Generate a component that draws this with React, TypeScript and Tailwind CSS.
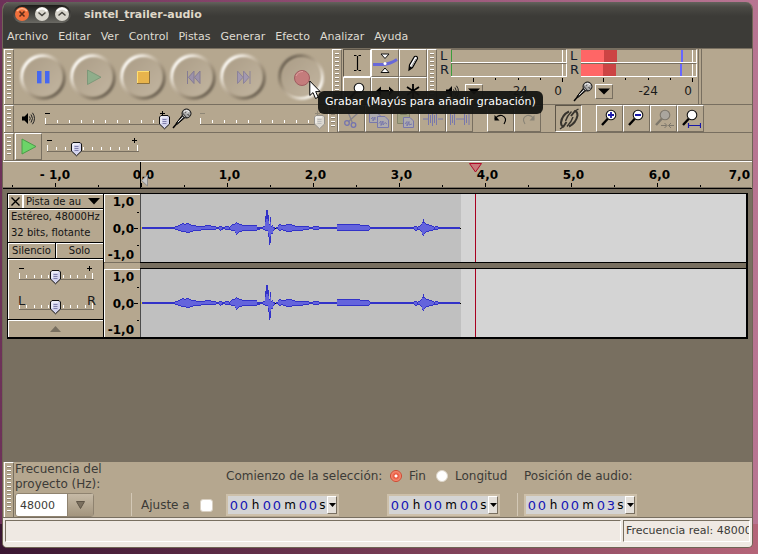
import React from "react";

const MENUS = ["Archivo", "Editar", "Ver", "Control", "Pistas", "Generar", "Efecto", "Analizar", "Ayuda"];

function Grip() {
  return (
    <div className="flex w-[10px] shrink-0 self-stretch border-l border-t border-r border-l-white border-t-white border-r-[#786f60] px-[2px] py-[3px]">
      <div className="w-[4px] bg-[repeating-linear-gradient(to_bottom,#fff_0px,#fff_1px,#8f8370_1px,#8f8370_2px,transparent_2px,transparent_4px)]" />
    </div>
  );
}

function Knob({ label, pressed, children }: { label: string; pressed?: boolean; children: React.ReactNode }) {
  const id = "k" + label;
  return (
    <button aria-label={label} className="block h-[50px] w-[50px]">
      <svg width="50" height="50" viewBox="0 0 50 50">
        <defs>
          <linearGradient id={id + "r"} x1={pressed ? 1 : 0} y1={pressed ? 1 : 0} x2={pressed ? 0 : 1} y2={pressed ? 0 : 1}>
            <stop offset="0.12" stopColor="#fffdf8" />
            <stop offset="0.42" stopColor="#c3b6a1" />
            <stop offset="0.62" stopColor="#a3957f" />
            <stop offset="0.9" stopColor="#6a6051" />
          </linearGradient>
          <linearGradient id={id + "f"} x1="0" y1="0" x2="1" y2="1">
            <stop offset="0" stopColor="#ab9d87" />
            <stop offset="1" stopColor="#c2b5a0" />
          </linearGradient>
          <filter id={id + "b"} x="-20%" y="-20%" width="140%" height="140%">
            <feGaussianBlur stdDeviation="1.3" />
          </filter>
        </defs>
        <circle cx="25" cy="25" r="21" fill="none" stroke={`url(#${id}r)`} strokeWidth="4" filter={`url(#${id}b)`} />
        <circle cx="25" cy="25" r="19" fill={`url(#${id}f)`} filter={`url(#${id}b)`} />
        {children}
      </svg>
    </button>
  );
}

function Slider(props: {
  label: string;
  width: number;
  start: number;
  step: number;
  count: number;
  value: number;
  ends?: [string, string];
  disabled?: boolean;
}) {
  const { label, width, start, step, count, value, ends, disabled } = props;
  const end = start + step * (count - 1);
  const tx = Math.round(start + (end - start) * (value / 100));
  const ink = disabled ? "#8f8776" : "#000";
  return (
    <div className="relative h-[26px]">
      <svg width={width} height="26" className="block" shapeRendering="crispEdges">
        {Array.from({ length: count }, (_, i) => {
          const x = Math.round(start + i * step);
          const big = i === 0 || i === count - 1;
          return <rect key={i} x={x} y={big ? 12 : 14} width="1" height={big ? 6 : 3} fill="#fff" />;
        })}
        <rect x={start} y="18" width={end - start + 2} height="1" fill="#786f60" />
        {ends ? (
          <g fontFamily="DejaVu Sans, sans-serif" fontSize="13" fill="#1c1c1c">
            <text x={start - 1} y="14">{ends[0]}</text>
            <text x={end - 5} y="14">{ends[1]}</text>
          </g>
        ) : (
          <g fill={ink}>
            <rect x={start} y="7" width="5" height="1" />
            <rect x={end - 5} y="7" width="5" height="1" />
            <rect x={end - 3} y="5" width="1" height="5" />
          </g>
        )}
        <g transform={`translate(${tx - 5} 9)`} shapeRendering="auto">
          <path d="M2 .5H9L10.5 2V9L5.500 13.800L.5 9V2Z" fill={disabled ? "#dcd8d0" : "#d4d4ee"} stroke={disabled ? "#94908a" : "#111"} />
          <path d="M2 8V2H8" fill="none" stroke="#fff" />
          <path d="M3.500 4.500H7.500M3.500 6.500H7.500M3.500 8.500H7.500" stroke={disabled ? "#bbb" : "#8080ac"} />
        </g>
      </svg>
      <input type="range" aria-label={label} defaultValue={value} disabled={disabled} className="absolute inset-0 h-full w-full opacity-0" />
    </div>
  );
}

function Mic() {
  return (
    <svg width="20" height="21" viewBox="0 0 20 21">
      <path d="M1 20L7 13" stroke="#000" strokeWidth="1.500" />
      <path d="M4 15.500L10.500 7L13 9.500L5.500 16Z" fill="#444" stroke="#000" />
      <path d="M6 14L11.500 8.500" stroke="#ddd" />
      <circle cx="14.500" cy="5.500" r="4.500" fill="#aaa" stroke="#111" />
      <path d="M10.500 5L15 10M12.500 3L17.500 8" stroke="#222" strokeWidth=".9" />
      <path d="M12 3.500L15 2.500L17 4M14 5h2" stroke="#fff" fill="none" />
    </svg>
  );
}

function Speaker() {
  return (
    <svg width="13" height="13" viewBox="0 0 13 13">
      <path d="M0 4.500H2.500L6 1V12L2.500 8.500H0Z" fill="#000" />
      <path d="M7.500 4.500Q9 6.500 7.500 8.500M9 2.500Q12 6.500 9 10.500M10.500 .8Q14.500 6.500 10.500 12.200" fill="none" stroke="#222" />
    </svg>
  );
}

function ToolButton({ label, down, wide, children }: { label: string; down?: boolean; wide?: boolean; children: React.ReactNode }) {
  const edge = down
    ? "border-l-[#5d5548] border-t-[#5d5548] border-r-white border-b-white"
    : "border-l-white border-t-white border-r-[#786f60] border-b-[#786f60]";
  return (
    <button aria-label={label} className={`flex shrink-0 items-center justify-center border ${edge} ${wide ? "h-[28px] w-[28px]" : "h-[27px] w-[27px]"}`}>
      {children}
    </button>
  );
}

function Lens({ kind }: { kind: "plus" | "minus" | "sel" | "fit" | "plain" }) {
  const dim = kind === "sel";
  return (
    <svg width="21" height="21" viewBox="0 0 21 21">
      <path d="M3 17L9 10.500" stroke={dim ? "#7d776b" : "#000"} strokeWidth="2.400" />
      <circle cx="12" cy="7" r="4.800" fill={dim ? "#aaa69e" : "#fff"} stroke={dim ? "#7d776b" : "#111"} strokeWidth="1.100" />
      {(kind === "plus" || kind === "minus") && <path d="M9 7H15" stroke="#1818a8" strokeWidth="1.800" />}
      {kind === "plus" && <path d="M12 4V10" stroke="#1818a8" strokeWidth="1.800" />}
      {kind === "fit" && <path d="M8.500 15V20M20.500 15V20M9 17.500H20" stroke="#1818a8" strokeWidth="1.200" />}
      {dim && <path d="M8 17.500H13.500M15.500 17.500H21M11.500 15L14 17.500L11.500 20M18 15L15.500 17.500L18 20" fill="none" stroke="#7d776b" />}
    </svg>
  );
}

function Meter({ name, levels }: { name: string; levels?: { light: string; dark: string; peak: string }[] }) {
  return (
    <div className="flex w-[130px] flex-col">
      {[0, 1].map((i) => (
        <div key={i} className="flex h-[14px] items-center">
          <span className="w-[14px] pl-[3px] text-[13px] leading-[14px] text-[#141c2c]">{i ? "R" : "L"}</span>
          <div className="flex h-[14px] w-[116px] border-b border-r border-b-white border-r-white border-t border-t-[#786f60]" role="meter" aria-label={name + (i ? " R" : " L")} aria-valuenow={levels ? 15 : 0}>
            {levels ? (
              <>
                <div className={`${levels[i].light} bg-[#ff6666]`} />
                <div className={`${levels[i].dark} bg-[#cc4444]`} />
                <div className="flex-1" />
                <div className="w-[2px] bg-[#6666ff]" />
                <div className={levels[i].peak} />
              </>
            ) : (
              <>
                <div className="w-[1px] bg-[#3c9c3c]" />
                <div className="flex-1" />
              </>
            )}
            <div className="mr-[3px] w-[1px] bg-white" />
          </div>
        </div>
      ))}
      <svg width="130" height="5" className="block" shapeRendering="crispEdges">
        {[36, 58, 81, 103, 125].map((x, i) => (
          <rect key={x} x={x} y="1" width="1" height={i === 0 || i === 4 ? 4 : 2} fill="#000" />
        ))}
      </svg>
      <div className="flex h-[18px] items-center text-[12px] text-[#1a1a1a]">
        <div className="flex w-[28px] items-center justify-end pr-[2px]">{levels ? <Mic /> : <div className="pr-[4px]"><Speaker /></div>}</div>
        <button aria-label={name} className="flex h-[15px] w-[18px] items-center justify-center border border-b-[#786f60] border-l-white border-r-[#786f60] border-t-white">
          <svg width="12" height="7"><path d="M0 .5H12L6 6.500Z" fill="#000" /></svg>
        </button>
        <span className="w-[45px] text-right">-24</span>
        <span className="w-[34px] text-right">0</span>
      </div>
    </div>
  );
}

const ENVELOPE: [number, number, number][] = [
  [0, 1, 1], [32, 1, 1], [35, 2, 2], [38, 3, 3], [41, 5, 4], [43, 4, 4], [47, 5, 5], [50, 3, 4], [53, 3, 3], [56, 2, 3], [62, 2, 2], [66, 3, 2], [72, 2, 2],
  [77, 1, 1], [79, 2, 3], [82, 1, 1], [86, 2, 2], [88, 1, 2], [91, 4, 3], [93, 4, 3], [95, 6, 7], [98, 4, 4], [103, 3, 3], [115, 3, 3], [116, 1, 2],
  [121, 1, 1], [123, 2, 2], [124, 12, 3], [125, 18, 3], [126, 18, 3], [127, 13, 9], [128, 4, 17], [129, 11, 15], [130, 2, 6], [131, 3, 6], [132, 1, 3],
  [134, 0, 0], [136, 1, 1], [138, 4, 3], [140, 3, 2], [143, 3, 3], [146, 4, 4], [149, 4, 4], [152, 3, 3], [155, 2, 3], [167, 2, 2], [168, 1, 1],
  [176, 2, 2], [178, 1, 1], [195, 1, 1], [196, 4, 3], [210, 4, 3], [227, 3, 3], [229, 1, 1], [272, 1, 1], [274, 2, 3], [276, 1, 2], [278, 2, 2],
  [280, 4, 4], [281, 6, 7], [282, 9, 8], [283, 6, 6], [285, 4, 4], [290, 3, 3], [293, 1, 2], [295, 2, 2], [298, 1, 1], [319, 1, 1],
];

function Waveform() {
  const cols: { x: number; u: number; d: number }[] = [];
  for (let k = 0; k < ENVELOPE.length - 1; k++) {
    const [x0, u0, d0] = ENVELOPE[k];
    const [x1, u1, d1] = ENVELOPE[k + 1];
    for (let x = x0; x < x1; x++) {
      const t = (x - x0) / (x1 - x0);
      cols.push({ x, u: Math.round(u0 + (u1 - u0) * t), d: Math.round(d0 + (d1 - d0) * t) });
    }
  }
  return (
    <svg width="320" height="68" className="block" shapeRendering="crispEdges">
      <rect x="0" y="34" width="320" height="1" fill="#000" />
      {cols.map(({ x, u, d }) => (
        <rect key={x} x={x} y={34 - u} width="1" height={u + d} fill="#3232c8" />
      ))}
      {cols.filter(({ u, d }) => u + d > 3).map(({ x, u, d }) => {
        const a = u > 8 ? Math.round(u * 0.5) : u - 1;
        const b = d > 8 ? Math.round(d * 0.5) : d - 1;
        return <rect key={x} x={x} y={34 - a} width="1" height={a + b} fill="#6464dc" />;
      })}
      <rect x="0" y="33" width="1" height="2" fill="#d8c840" />
    </svg>
  );
}

function Channel() {
  return (
    <div className="flex h-[68px]">
      <div className="flex w-[36px] border-l border-t border-l-white border-t-white">
        <div className="flex flex-1 flex-col justify-between text-right text-[12px] font-bold leading-[14px] text-black">
          <span>1,0</span>
          <span>0,0</span>
          <span>-1,0</span>
        </div>
        <svg width="6" height="67" shapeRendering="crispEdges">
          <path d="M0 33.500H4M3 17.500H5M3 50.500H5" stroke="#000" />
        </svg>
      </div>
      <div className="border-l border-[#4c4c4c] bg-[#c0c0c0]">
        <Waveform />
      </div>
      <div className="flex flex-1 bg-[#d4d4d4] pl-[14px]">
        <div className="w-[1px] bg-[#a80020]" />
      </div>
    </div>
  );
}

function TimeBox({ label, seconds }: { label: string; seconds: string }) {
  const group = (a: string, b: string) => (
    <>
      <span className="w-[10px] text-center text-[#1414b4]">{a}</span>
      <span className="w-[10px] text-center text-[#1414b4]">{b}</span>
    </>
  );
  return (
    <div role="group" aria-label={label} className="flex h-[22px] w-[113px] items-center border-2 border-[#cdc0aa] bg-[#d4d4d4] pl-[1px] text-[13px] text-black">
      {group("0", "0")}
      <span className="w-[13px] text-center text-[12px]">h</span>
      {group("0", "0")}
      <span className="w-[16px] text-center text-[12px]">m</span>
      {group(seconds[0], seconds[1])}
      <span className="w-[9px] text-center text-[12px]">s</span>
      <button aria-label={"Formato de " + label} className="flex h-full flex-1 items-center justify-center border border-b-[#786f60] border-l-white border-r-[#786f60] border-t-white bg-[#e4e0da]">
        <svg width="7" height="4"><path d="M0 0H7L3.500 4Z" fill="#000" /></svg>
      </button>
    </div>
  );
}

export default function App() {
  return (
    <div className="relative flex min-h-screen bg-[linear-gradient(to_right,#6d3159_0%,#8d4b70_40%,#b87592_100%)] font-['DejaVu_Sans','Liberation_Sans',sans-serif]">
      <div className="flex min-w-0 flex-1 flex-col bg-[linear-gradient(to_right,#3a1632,#6e3650_45%,#b46478)] bg-[length:100%_30px] bg-bottom bg-no-repeat pb-[6px] pl-[2px] pr-[5px] pt-[2px]">
        <div className="flex min-w-0 flex-1 flex-col overflow-hidden rounded-b-[5px] rounded-t-[7px] border-x border-b border-[#6f6455] bg-[#b5a78f]">
          <header className="bg-[linear-gradient(to_bottom,#63625c_0px,#4b4a45_5px,#3c3b37_14px)]">
            <div className="flex h-[24px] items-center pl-[10px]">
              <div className="mr-[13px] flex h-[18px] items-center gap-[6px] rounded-full bg-[linear-gradient(to_bottom,#1d1c1a,#6a6963)] px-[2px]">
                <button aria-label="Cerrar">
                  <svg width="14" height="14" viewBox="0 0 14 14"><circle cx="7" cy="7" r="7" fill="#f0703c" /><path d="M2 4Q7-1 12 4" fill="none" stroke="#ffb48c" strokeWidth="1.500" /><path d="M4.500 4.500L9.500 9.500M9.500 4.500L4.500 9.500" stroke="#5c2c18" strokeWidth="1.600" /></svg>
                </button>
                <button aria-label="Minimizar">
                  <svg width="14" height="14" viewBox="0 0 14 14"><circle cx="7" cy="7" r="7" fill="#d8d5cc" /><path d="M2 4Q7-1 12 4" fill="none" stroke="#fff" strokeWidth="2" /><path d="M3.500 5.500L7 8.500L10.500 5.500" fill="none" stroke="#44423c" strokeWidth="1.500" /></svg>
                </button>
                <button aria-label="Maximizar">
                  <svg width="14" height="14" viewBox="0 0 14 14"><circle cx="7" cy="7" r="7" fill="#d8d5cc" /><path d="M2 4Q7-1 12 4" fill="none" stroke="#fff" strokeWidth="2" /><path d="M3.500 8.500L7 5.500L10.500 8.500" fill="none" stroke="#44423c" strokeWidth="1.500" /></svg>
                </button>
              </div>
              <h1 className="pt-[2px] text-[11px] font-bold text-[#dfd8c8]">sintel_trailer-audio</h1>
            </div>
            <nav className="flex h-[22px] items-center gap-[10px] pl-[4px] text-[11px] text-[#dfdbd2]">
              {MENUS.map((m) => (
                <button key={m}>{m}</button>
              ))}
            </nav>
          </header>

          <div className="border-t border-[#786f60] pl-[1px]">
            <div className="flex h-[56px] border-b border-[#786f60]">
              <Grip />
              <div className="flex w-[318px] items-center pl-[4px]">
                <Knob label="Pausa"><path d="M19 19H23.500V31H19ZM27 19H31.500V31H27Z" fill="#4668f0" /><path d="M19 31.500H23.500M27 31.500H31.500" stroke="#8c93c0" /></Knob>
                <Knob label="Reproducir"><path d="M19.500 18V32.500L33 25.200Z" fill="#8fae8b" stroke="#759374" strokeWidth=".8" /></Knob>
                <Knob label="Detener"><path d="M19 19H31V31H19Z" fill="#e8b44c" /><path d="M19.500 31V19.500H31" fill="none" stroke="#ffdf70" /><path d="M19 31.500H31.500V19" fill="none" stroke="#8d713c" /></Knob>
                <Knob label="Inicio"><path d="M19.500 19V32M26 19V31.500L20.500 25.300ZM32 19V31.500L26.500 25.300Z" fill="#9c92aa" stroke="#857c94" /></Knob>
                <Knob label="Final"><path d="M19.500 19V31.500L25 25.300ZM25.500 19V31.500L31 25.300ZM32 19V32" fill="#a399b0" stroke="#8c839a" /></Knob>
                <div className="pl-[8px]">
                  <Knob label="Grabar" pressed><circle cx="26" cy="26" r="7.500" fill="#c47c7c" stroke="#a05c60" /><path d="M20 24Q22 19.500 27 19.500" fill="none" stroke="#e0a0a0" /></Knob>
                </div>
              </div>
              <Grip />
              <div className="grid grid-cols-3 pl-[1px]">
                <ToolButton wide label="Selección" down><svg width="20" height="20" viewBox="0 0 20 20"><path d="M7 2.500H9.500M11.500 2.500H14M7 17.500H9.500M11.500 17.500H14M10.500 3V17" stroke="#000" strokeWidth="1.200" /></svg></ToolButton>
                <ToolButton wide label="Envolvente"><svg width="26" height="22" viewBox="0 0 26 22"><path d="M1 12.500H11Q18 12 25 7.500" fill="none" stroke="#6868d8" strokeWidth="3" /><circle cx="13" cy="11.500" r="1.500" fill="#fff" /><path d="M9 2H17L13 6.500ZM9 20.500H17L13 16Z" fill="#fff" stroke="#111" /></svg></ToolButton>
                <ToolButton wide label="Dibujo"><svg width="20" height="20" viewBox="0 0 20 20"><path d="M6 17L6.500 12L11.500 3.500Q14.500 2.500 14.500 5.500L9.500 14.500Z" fill="#fff" stroke="#000" strokeWidth="1.200" /><path d="M6 17L6.500 13L9 14.500Z" fill="#000" /><path d="M13 6L8.500 13.500" stroke="#888" /></svg></ToolButton>
                <ToolButton wide label="Zoom"><Lens kind="plain" /></ToolButton>
                <ToolButton wide label="Desplazamiento"><svg width="18" height="12" viewBox="0 0 18 12"><path d="M0 6L5 1.500V10.500ZM18 6L13 1.500V10.500ZM4 5H14V7H4Z" fill="#000" /></svg></ToolButton>
                <ToolButton wide label="Multi"><svg width="14" height="14" viewBox="0 0 14 14"><path d="M7 0V14M1 3L13 11M13 3L1 11" stroke="#000" strokeWidth="1.800" /></svg></ToolButton>
              </div>
              <Grip />
              <div className="flex border-r border-[#786f60] pr-[1px]">
                <Meter name="Reproducción" />
                <Meter
                  name="Grabación"
                  levels={[
                    { light: "w-[23px]", dark: "w-[13px]", peak: "w-[9px]" },
                    { light: "w-[22px]", dark: "w-[13px]", peak: "w-[10px]" },
                  ]}
                />
              </div>
              <div className="w-[3px] border-r border-[#786f60]" />
            </div>

            <div className="flex h-[28px] border-b border-[#786f60]">
              <Grip />
              <div className="flex w-[314px] items-center pl-[8px]">
                <Speaker />
                <div className="pl-[5px]"><Slider label="Volumen de salida" width={132} start={5} step={12} count={11} value={99} /></div>
                <Mic />
                <div className="pl-[3px]"><Slider label="Volumen de entrada" width={130} start={5} step={12} count={11} value={99} disabled /></div>
              </div>
              <Grip />
              <ToolButton label="Cortar"><svg width="20" height="20" viewBox="0 0 20 20" fill="none" stroke="#7474b0" strokeWidth="1.300"><path d="M6 3L10.500 14M16 4L6 13" stroke="#86838c" /><circle cx="5" cy="14" r="2.300" /><circle cx="11.500" cy="16" r="2.300" /></svg></ToolButton>
              <ToolButton label="Copiar"><svg width="22" height="20" viewBox="0 0 22 20" stroke="#7878ac" fill="#aeabae"><path d="M1.500 3.500H9L12.500 7V13.500H1.500Z" /><path d="M9.500 7.500H17L20.500 11V18.500H9.500Z" /><path d="M3 10L5 8V12L7 8V11M11 14.500L13 12V16.500L15 12V16L17 13.500L19 15" fill="none" /></svg></ToolButton>
              <ToolButton label="Pegar"><svg width="22" height="20" viewBox="0 0 22 20" stroke="#7878ac" fill="#aeabae"><path d="M2.500 3.500H14.500V14.500H2.500Z" fill="#a3a384" stroke="#85856a" /><path d="M5.500 2.500H11.500V5.500H5.500Z" fill="#b5b5a0" stroke="#85856a" /><path d="M8.500 8.500H15L18.500 12V18.500H8.500Z" /><path d="M10 15L12 12.500V17L14 12.500V16L17 15" fill="none" /></svg></ToolButton>
              <ToolButton label="Recortar"><svg width="22" height="20" viewBox="0 0 22 20" stroke="#7878ac" fill="none"><path d="M1 10H6M16 10H21M6.500 3V16M8.500 6V14M10.500 3V17M12.500 6V14M14.500 3V16" /></svg></ToolButton>
              <ToolButton label="Silenciar"><svg width="22" height="20" viewBox="0 0 22 20" stroke="#7878ac" fill="none"><path d="M1.500 3V16M3.500 6V14M5.500 3V16M7 10H15M15.500 3V16M17.500 6V14M20 3V16" /></svg></ToolButton>
              <div className="w-[14px]" />
              <ToolButton label="Deshacer"><svg width="16" height="14" viewBox="0 0 16 14"><path d="M2 7Q5 2.500 9 3.500Q15 6 11 12" fill="none" stroke="#000" strokeWidth="1.200" /><path d="M1.500 3V8.500H6.500Z" fill="#000" /></svg></ToolButton>
              <ToolButton label="Rehacer"><svg width="16" height="14" viewBox="0 0 16 14"><path d="M14 7Q11 2.500 7 3.500Q1 6 5 12" fill="none" stroke="#8a8477" strokeWidth="1.200" /><path d="M14.500 3V8.500H9.500Z" fill="#8a8477" /></svg></ToolButton>
              <div className="w-[14px]" />
              <ToolButton label="Enlazar pistas" down><svg width="24" height="24" viewBox="0 0 24 24" fill="none" stroke="#38342e" strokeWidth="2"><path d="M12 4.500Q5 8 4 15.500Q4 19 6.500 19.500L9.500 15" /><path d="M12 19.500Q19 16 20.500 8.500Q20.500 4.500 18 4L14 9" /><path d="M8.500 14Q10 9 14.500 4.500M10 19.500Q14.500 15 16 10" strokeWidth="1.400" /><path d="M18 4L21.500 2M6.500 19.500L3 22" strokeWidth="1.400" /></svg></ToolButton>
              <div className="w-[14px]" />
              <ToolButton label="Acercar"><Lens kind="plus" /></ToolButton>
              <ToolButton label="Alejar"><Lens kind="minus" /></ToolButton>
              <ToolButton label="Ajustar selección"><Lens kind="sel" /></ToolButton>
              <ToolButton label="Ajustar proyecto"><Lens kind="fit" /></ToolButton>
            </div>

            <div className="flex h-[28px] border-b border-[#786f60]">
              <Grip />
              <div className="pl-[1px]">
                <ToolButton label="Reproducir a velocidad"><svg width="16" height="17" viewBox="0 0 16 17"><path d="M1 1V16L15 8.500Z" fill="#6cd468" stroke="#4a9c48" /></svg></ToolButton>
              </div>
              <Slider label="Velocidad" width={110} start={5} step={9} count={11} value={32} />
            </div>
          </div>

          <div className="relative h-[28px] border-b border-t border-b-black border-t-white">
            <div className="flex h-[20px] items-center pl-[9px] pr-[2px] pt-[6px] text-[12px] font-bold text-black">
              <span className="w-[86px] shrink-0 text-center">- 1,0</span>
              {["0,0", "1,0", "2,0", "3,0", "4,0", "5,0", "6,0"].map((t) => (
                <span key={t} className="w-[86px] shrink-0 pl-[5px] text-center">{t}</span>
              ))}
              <span className="flex-1 text-right">7,0</span>
            </div>
            <svg width="748" height="6" className="block" shapeRendering="crispEdges">
              {Array.from({ length: 17 }, (_, i) => (
                <rect key={i} x={9 + i * 43} y={i % 2 ? 1 : 3} width="1" height={i % 2 ? 4 : 2} fill="#000" />
              ))}
              <rect x="0" y="5" width="748" height="1" fill="#786f60" />
            </svg>
            <svg width="748" height="27" className="absolute left-0 top-0" shapeRendering="crispEdges">
              <rect x="137" y="0" width="1" height="26" fill="#000" />
              <path d="M144.500 13V24L138.500 18.500Z" fill="#c8c8c8" stroke="#8c8c8c" shapeRendering="auto" />
              <path d="M466.500 1.500H478.500L472.500 10Z" fill="#c87878" stroke="#b00828" shapeRendering="auto" />
            </svg>
          </div>

          <main className="flex-1 bg-[#786f60] p-[4px]">
            <section className="flex h-[146px] border border-b-2 border-r-2 border-black bg-[#b5a78f]">
              <div className="flex w-[96px] shrink-0 flex-col divide-y divide-black border-r border-black text-[10px] leading-[16px] text-[#141414]">
                <div className="flex h-[15px] divide-x divide-black">
                  <button aria-label="Cerrar pista" className="flex w-[15px] items-center justify-center border-l border-t border-white">
                    <svg width="9" height="9"><path d="M.5 .5L8.500 8.500M8.500 .5L.5 8.500" stroke="#000" strokeWidth="1.400" /></svg>
                  </button>
                  <button className="flex flex-1 items-center justify-between px-[3px] leading-[13px] shadow-[inset_1px_1px_0_#fff]">
                    <span className="whitespace-nowrap">Pista de au</span>
                    <svg width="12" height="7"><path d="M0 0H12L6 6.500Z" fill="#000" /></svg>
                  </button>
                </div>
                <div className="h-[34px] whitespace-nowrap pl-[3px] shadow-[inset_1px_1px_0_#fff]">
                  <p>Estéreo, 48000Hz</p>
                  <p>32 bits, flotante</p>
                </div>
                <div className="flex h-[16px] divide-x divide-black">
                  <button className="w-[48px] leading-[13px] shadow-[inset_1px_1px_0_#fff]">Silencio</button>
                  <button className="flex-1 leading-[13px] shadow-[inset_1px_1px_0_#fff]">Solo</button>
                </div>
                <div className="flex h-[61px] flex-col gap-[4px] pl-[6px] pt-[2px] shadow-[inset_1px_1px_0_#fff]">
                  <Slider label="Ganancia" width={84} start={5} step={7.3} count={11} value={49} />
                  <Slider label="Panorama" width={84} start={5} step={7.3} count={11} value={49} ends={["L", "R"]} />
                </div>
                <button aria-label="Contraer" className="flex flex-1 items-center justify-center shadow-[inset_1px_1px_0_#fff]">
                  <svg width="11" height="6"><path d="M0 6H11L5.500 0Z" fill="#786f60" /></svg>
                </button>
              </div>
              <div className="flex min-w-0 flex-1 flex-col">
                <Channel />
                <div className="flex h-[7px]">
                  <div className="w-[36px] border-t border-[#786f60]" />
                  <div className="flex-1 border-y border-black bg-[#786f60]" />
                </div>
                <Channel />
              </div>
            </section>
          </main>

          <footer>
            <div className="flex h-[56px] border-b border-[#786f60] pl-[1px] text-[12px] leading-[15px] text-[#3c3b37]">
              <Grip />
              <div className="flex w-[117px] flex-col pl-[1px]">
                <label htmlFor="rate" className="h-[31px] w-[110px]">Frecuencia del proyecto (Hz):</label>
                <div className="flex h-[24px] w-[79px] rounded-[3px] border border-[#8f8370] bg-white">
                  <input id="rate" defaultValue="48000" className="w-[51px] bg-transparent pl-[4px] text-[11px] outline-none" />
                  <button aria-label="Elegir frecuencia" className="flex flex-1 items-center justify-center border-l border-[#8f8370] bg-[linear-gradient(to_bottom,#c6baa6,#a3957e)]">
                    <svg width="9" height="8"><path d="M.5 .5H8.500L4.500 7.500Z" fill="#7b705f" stroke="#5f5547" /></svg>
                  </button>
                </div>
              </div>
              <div className="mt-[31px] h-[23px] w-[1px] bg-[#d3c8b6]" />
              <div className="flex w-[94px] items-center gap-[10px] pl-[9px] pt-[31px]">
                <label htmlFor="snap" className="whitespace-nowrap">Ajuste a</label>
                <input id="snap" type="checkbox" className="h-[13px] w-[13px] appearance-none rounded-[3px] border border-[#d9d0c2] bg-white" />
              </div>
              <div className="flex w-[161px] flex-col">
                <span className="h-[32px] whitespace-nowrap pt-[7px]">Comienzo de la selección:</span>
                <TimeBox label="Comienzo de la selección" seconds="00" />
              </div>
              <div className="flex w-[130px] flex-col">
                <div className="flex h-[32px] items-center pb-[4px] pl-[3px]">
                  <label className="flex items-center gap-[7px] pr-[10px]">
                    <input type="radio" name="end" defaultChecked className="h-[12px] w-[12px] appearance-none rounded-full border border-[#d04830] bg-[radial-gradient(circle,#fff_0px,#fff_1px,#e8553a_2px,#f5937c_5px)]" />
                    Fin
                  </label>
                  <label className="flex items-center gap-[7px]">
                    <input type="radio" name="end" className="h-[12px] w-[12px] appearance-none rounded-full border border-[#ddd5c8] bg-white" />
                    Longitud
                  </label>
                </div>
                <TimeBox label="Fin" seconds="00" />
              </div>
              <div className="mt-[31px] h-[23px] w-[1px] bg-[#d3c8b6]" />
              <div className="flex flex-col pl-[6px]">
                <span className="h-[32px] whitespace-nowrap pt-[7px]">Posición de audio:</span>
                <TimeBox label="Posición de audio" seconds="03" />
              </div>
            </div>
            <div className="flex h-[29px] gap-[2px] bg-[#efe9e3] px-[2px] pb-[5px] pt-[2px] text-[11px] text-[#3c3b37]">
              <div className="flex-1 border border-b-white border-l-[#786f60] border-r-white border-t-[#786f60]" />
              <div className="flex w-[127px] items-center overflow-hidden whitespace-nowrap border border-b-white border-l-[#786f60] border-r-white border-t-[#786f60] pl-[2px]">Frecuencia real: 48000</div>
            </div>
          </footer>
        </div>
      </div>

      <div role="tooltip" className="absolute left-[318px] top-[91px] flex h-[23px] items-center whitespace-nowrap rounded-[6px] bg-[#141412]/95 px-[7px] text-[11px] text-white">
        Grabar (Mayús para añadir grabación)
      </div>
      <svg width="14" height="20" viewBox="0 0 14 20" className="absolute left-[309px] top-[80px]">
        <path d="M.8 1V15.500L4 12.600L6.500 18.500L9.200 17.300L6.700 11.600H11.200Z" fill="#fff" stroke="#000" />
      </svg>
    </div>
  );
}
